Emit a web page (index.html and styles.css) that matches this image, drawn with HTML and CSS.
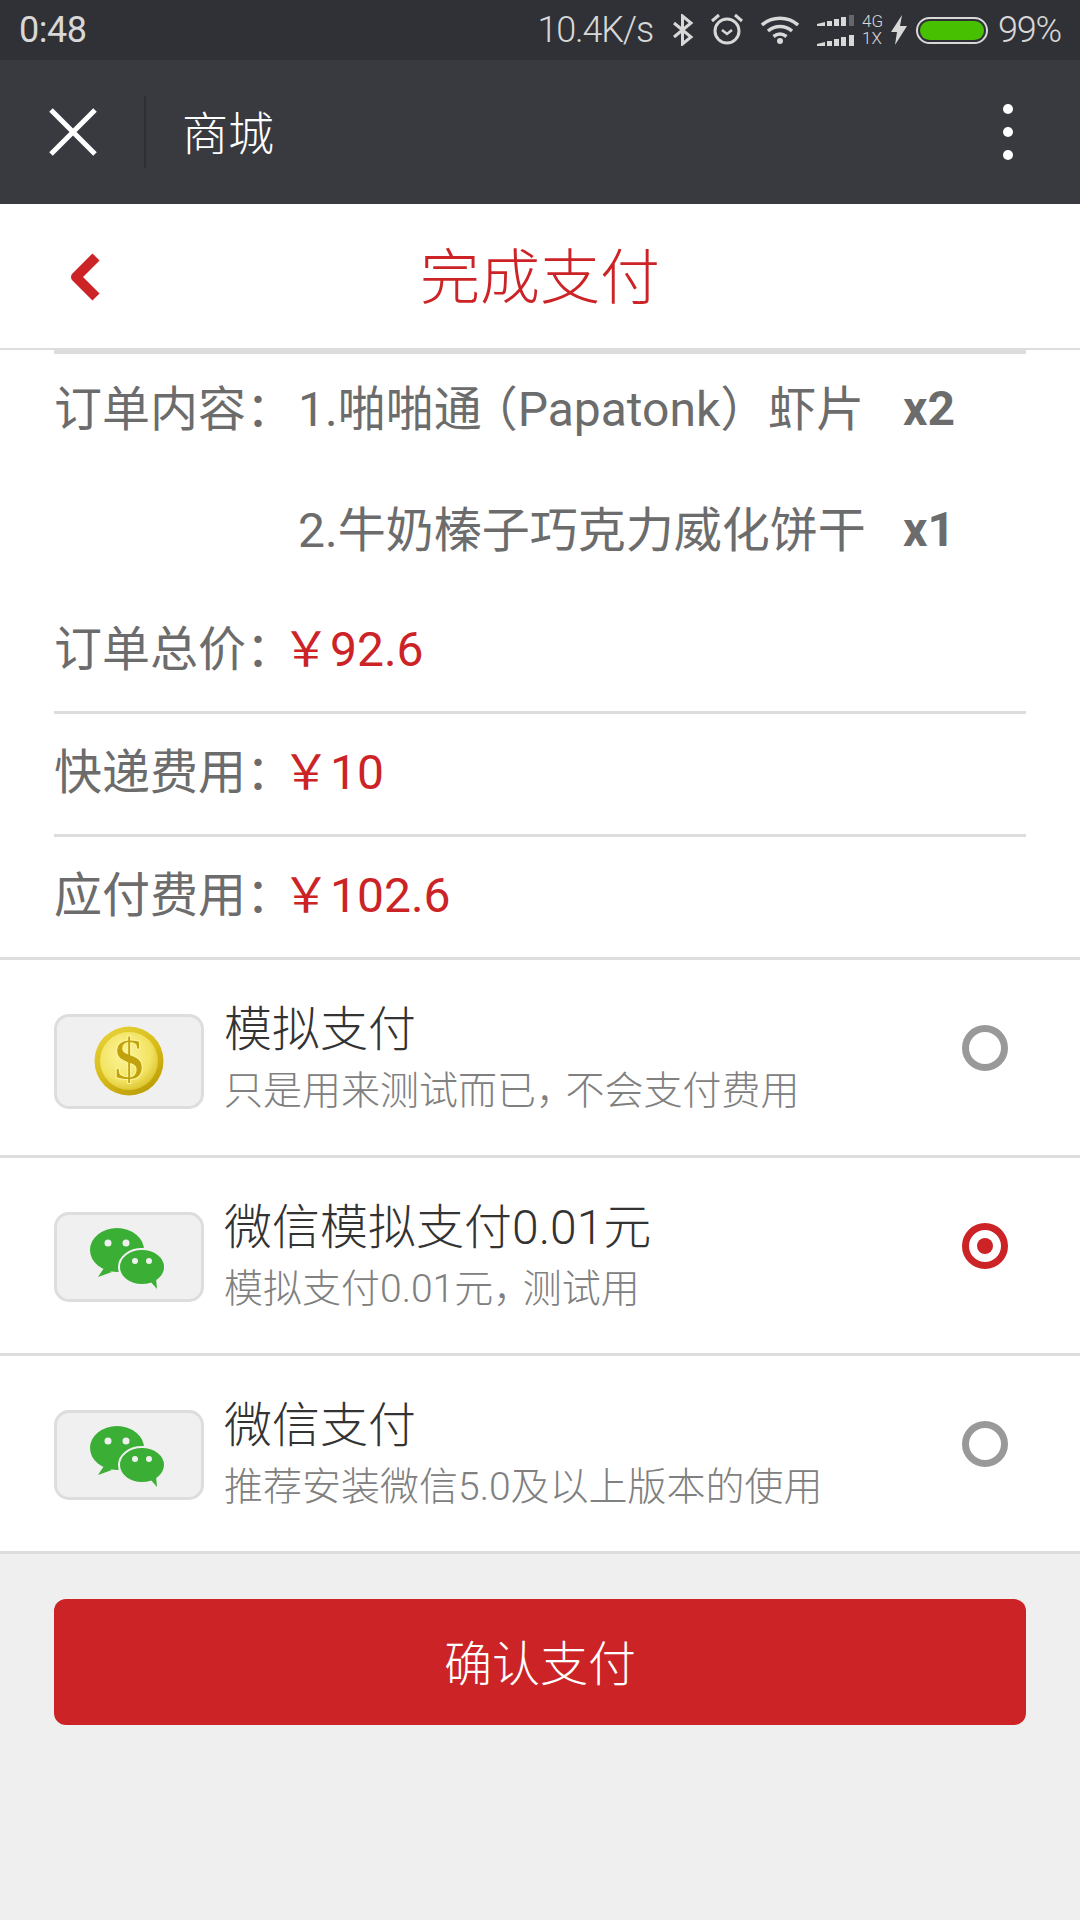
FILE: index.html
```html
<!DOCTYPE html>
<html lang="zh-CN">
<head>
  <meta charset="UTF-8">
  <title>完成支付</title>
  <link rel="stylesheet" href="styles.css">
</head>
<body>

  <!-- status bar -->
  <div class="status-bar">
    <span class="status-time">0:48</span>
    <div class="status-icons">
      <span class="net-speed">10.4K/s</span>
      <svg class="ic-bt" width="22" height="32" viewBox="0 0 22 32"><path d="M2 9l17 14-8.500 7V2L19 9 2 23" fill="none" stroke="#d8d8d8" stroke-width="3"/></svg>
      <svg class="ic-alarm" width="32" height="32" viewBox="0 0 32 32"><circle cx="16" cy="18" r="12" fill="none" stroke="#d8d8d8" stroke-width="3"/><path d="M11 17l5 4 5-4" fill="none" stroke="#d8d8d8" stroke-width="2.500"/><path d="M1 8l7-6M31 8l-7-6" stroke="#d8d8d8" stroke-width="3"/></svg>
      <svg class="ic-wifi" width="38" height="28" viewBox="0 0 38 28"><path d="M1 9c10-9 26-9 36 0M7 15c7-6 17-6 24 0M12.500 20.500c4-3 9-3 13 0" fill="none" stroke="#d8d8d8" stroke-width="3.500"/><circle cx="19" cy="25" r="3" fill="#d8d8d8"/></svg>
      <svg class="ic-signal" width="37" height="31" viewBox="0 0 37 31"><path d="M0 9l8-2v4H0zM10 6h5v5h-5zM17 4h5v7h-5zM24 2h5v9h-5z" fill="#d8d8d8"/><path d="M32 0h5v11h-5z" fill="#66676a"/><path d="M0 29l8-2v4H0zM10 26h5v5h-5zM17 24h5v7h-5zM24 22h5v9h-5zM32 20h5v11h-5z" fill="#d8d8d8"/></svg>
      <div class="net-type"><span>4G</span><span>1X</span></div>
      <svg class="ic-bolt" width="16" height="30" viewBox="0 0 16 30"><path d="M11 0L0 17h6L4 30 16 11h-7z" fill="#d8d8d8"/></svg>
      <div class="battery"><div class="battery-fill"></div></div>
      <span class="battery-pct">99%</span>
    </div>
  </div>

  <!-- webview nav -->
  <div class="nav-bar">
    <svg class="nav-close" width="48" height="48" viewBox="0 0 48 48"><path d="M2 2l44 44M46 2L2 46" stroke="#fff" stroke-width="5"/></svg>
    <div class="nav-line"></div>
    <span class="nav-title">商城</span>
    <div class="nav-more"><i></i><i></i><i></i></div>
  </div>

  <!-- page header -->
  <div class="header">
    <svg class="back" width="32" height="48" viewBox="0 0 32 48"><path d="M27 4L7 24l20 20" fill="none" stroke="#cc2326" stroke-width="10" stroke-linejoin="round"/></svg>
    <h1 class="header-title">完成支付</h1>
  </div>

  <div class="order">
    <div class="order-row first">
      <span class="label">订单内容<span class="half">：</span></span>
      <span class="item-name">1.啪啪通<span class="half paren">（</span>Papatonk）虾片</span>
      <b class="item-count">x2</b>
    </div>
    <div class="order-row">
      <span class="label"></span>
      <span class="item-name">2.牛奶榛子巧克力威化饼干</span>
      <b class="item-count">x1</b>
    </div>
    <div class="order-row line">
      <span class="label">订单总价<span class="half">：</span></span>
      <span class="price">￥92.6</span>
    </div>
    <div class="order-row line">
      <span class="label">快递费用<span class="half">：</span></span>
      <span class="price">￥10</span>
    </div>
    <div class="order-row">
      <span class="label">应付费用<span class="half">：</span></span>
      <span class="price">￥102.6</span>
    </div>
  </div>

  <div class="pay-list">
    <div class="pay-item">
      <div class="pay-icon tall">
        <svg width="72" height="72" viewBox="0 0 72 72">
          <defs>
            <radialGradient id="coin" cx="42%" cy="38%" r="65%">
              <stop offset="0" stop-color="#fdf59a"/>
              <stop offset="0.7" stop-color="#f2e362"/>
              <stop offset="1" stop-color="#dcc42e"/>
            </radialGradient>
            <linearGradient id="rim" x1="0.2" y1="0" x2="0.8" y2="1">
              <stop offset="0" stop-color="#e6d23a"/>
              <stop offset="0.5" stop-color="#d8bc18"/>
              <stop offset="1" stop-color="#b99a06"/>
            </linearGradient>
          </defs>
          <circle cx="36" cy="36" r="34.500" fill="url(#rim)"/>
          <circle cx="36" cy="36" r="29" fill="url(#coin)"/>
          <text class="coin-mark" x="36" y="54" text-anchor="middle">$</text>
        </svg>
      </div>
      <div class="pay-text">
        <div class="pay-name">模拟支付</div>
        <div class="pay-desc">只是用来测试而已<span class="half comma">，</span>不会支付费用</div>
      </div>
      <div class="radio"></div>
    </div>
    <div class="pay-item">
      <div class="pay-icon">
        <svg width="90" height="85" viewBox="-1 -2 90 85"><use href="#wx"/></svg>
      </div>
      <div class="pay-text">
        <div class="pay-name">微信模拟支付0.01元</div>
        <div class="pay-desc">模拟支付0.01元<span class="half comma">，</span>测试用</div>
      </div>
      <div class="radio on"></div>
    </div>
    <div class="pay-item">
      <div class="pay-icon">
        <svg width="90" height="85" viewBox="-1 -2 90 85"><use href="#wx"/></svg>
      </div>
      <div class="pay-text">
        <div class="pay-name">微信支付</div>
        <div class="pay-desc">推荐安装微信5.0及以上版本的使用</div>
      </div>
      <div class="radio"></div>
    </div>
  </div>

  <button class="pay-btn">确认支付</button>

  <!-- wechat logo, used twice -->
  <svg class="defs" width="0" height="0">
    <symbol id="wx" viewBox="0 0 90 85">
      <ellipse cx="32" cy="34" rx="27" ry="22" fill="#3bae36"/>
      <path d="M19 52l-6 9 14-5z" fill="#3bae36"/>
      <ellipse cx="57" cy="51" rx="23" ry="18" fill="#3bae36" stroke="#f0f0f0" stroke-width="2"/>
      <path d="M65 65l7 8-1-11z" fill="#3bae36"/>
      <circle cx="23" cy="27" r="3.500" fill="#f0f0f0"/>
      <circle cx="41" cy="27" r="3.500" fill="#f0f0f0"/>
      <circle cx="50" cy="45" r="3" fill="#f0f0f0"/>
      <circle cx="64" cy="45" r="3" fill="#f0f0f0"/>
    </symbol>
  </svg>

</body>
</html>
```

FILE: styles.css
```css
* {
  box-sizing: border-box;
}
html, body {
  height: 100%;
}
body {
  margin: 0;
  background: #efefef;
  color: #6c6c6c;
  font-family: Roboto, "Noto Sans CJK SC", sans-serif;
}

/* status bar */
.status-bar {
  height: 60px;
  background: #303136;
  color: #d8d8d8;
  display: flex;
  align-items: center;
  justify-content: space-between;
  padding: 0 19px;
  font-size: 36px;
}
.status-time {
  letter-spacing: -0.5px;
}
.status-icons {
  display: flex;
  align-items: center;
}
.net-speed,
.battery-pct {
  font-weight: 300;
  letter-spacing: -1.2px;
}
.ic-bt { margin-left: 19px; }
.ic-alarm { margin-left: 17px; margin-top: -2px; }
.ic-wifi { margin-left: 18px; margin-top: -1px; }
.ic-signal { margin-left: 18px; }
.net-type {
  display: flex;
  flex-direction: column;
  margin-left: 8px;
  font-size: 17px;
  font-weight: 300;
  line-height: 17px;
}
.ic-bolt { margin-left: 8px; }
.battery {
  width: 72px;
  height: 27px;
  margin-left: 9px;
  padding: 2px;
  border: 2px solid #d8d8d8;
  border-radius: 14px;
}
.battery-fill {
  height: 100%;
  background: #46c000;
  border-radius: 10px;
}
.battery-pct {
  margin-left: 10px;
}

/* nav */
.nav-bar {
  height: 144px;
  background: #393a40;
  display: flex;
  align-items: center;
  padding: 0 67px 0 49px;
}
.nav-line {
  width: 2px;
  height: 72px;
  margin-left: 47px;
  background: #2e2f33;
}
.nav-title {
  margin-left: 36px;
  margin-bottom: 4px;
  color: #fff;
  font-size: 46px;
  font-weight: 300;
}
.nav-more {
  margin-left: auto;
  display: flex;
  flex-direction: column;
  gap: 13px;
}
.nav-more i {
  display: block;
  width: 10px;
  height: 10px;
  border-radius: 50%;
  background: #fff;
}

/* header */
.header {
  position: relative;
  height: 146px;
  padding-bottom: 8px;
  background: #fff;
  border-bottom: 2px solid #ddd;
  display: flex;
  align-items: center;
  justify-content: center;
}
.back {
  position: absolute;
  left: 69px;
  top: 49px;
}
.header-title {
  margin: 0;
  color: #cc2326;
  font-size: 60px;
  font-weight: 300;
}

/* order */
.order {
  background: #fff;
  padding: 0 54px;
  border-bottom: 3px solid #ddd;
}
.order::before {
  content: "";
  display: block;
  height: 4px;
  background: #ddd;
}
.order-row {
  display: flex;
  align-items: center;
  height: 119px;
  padding-bottom: 13px;
  font-size: 48px;
}
.order-row.first {
  padding-bottom: 17px;
}
.order-row.line {
  height: 123px;
  border-bottom: 3px solid #ddd;
}
.order-row.line:nth-child(3) {
  height: 122px;
}
.order-row:last-child {
  height: 120px;
}
.label {
  width: 228px;
  flex: none;
}
.half {
  font-feature-settings: "halt";
}
.item-name {
  width: 605px;
  flex: none;
  margin-left: 16px;
}
.paren {
  margin-left: 12px;
}
.item-count {
  margin-top: 6px;
  font-weight: 700;
}
.price {
  color: #cc2326;
}

/* pay options */
.pay-list {
  background: #fff;
}
.pay-item {
  height: 198px;
  display: flex;
  align-items: center;
  padding: 0 72px 0 54px;
  border-bottom: 3px solid #ddd;
}
.pay-icon {
  width: 150px;
  height: 90px;
  flex: none;
  margin-top: 2px;
  background: #f0f0f0;
  border: 3px solid #ddd;
  border-radius: 15px;
  display: flex;
  align-items: center;
  justify-content: center;
}
.pay-icon.tall {
  height: 95px;
  margin-top: 7px;
}
.coin-mark {
  fill: #c2a20c;
  stroke: #fff6a0;
  stroke-width: 1px;
  font-family: "Liberation Serif", serif;
  font-size: 60px;
  font-weight: 700;
}
.pay-text {
  flex: 1;
  margin-top: 4px;
  margin-left: 20px;
}
.pay-name {
  color: #333;
  font-size: 48px;
  font-weight: 300;
  line-height: 62px;
}
.pay-desc {
  color: #808080;
  font-size: 39px;
  font-weight: 300;
  line-height: 60px;
}
.comma {
  margin-right: 10px;
}
.radio {
  width: 46px;
  height: 46px;
  flex: none;
  margin-bottom: 20px;
  border: 7px solid #999;
  border-radius: 50%;
}
.radio.on {
  border-color: #cc2326;
  display: flex;
  align-items: center;
  justify-content: center;
}
.radio.on::after {
  content: "";
  width: 16px;
  height: 16px;
  border-radius: 50%;
  background: #cc2326;
}

.pay-btn {
  display: block;
  width: 972px;
  height: 126px;
  margin: 45px 54px 0;
  padding: 0 0 4px;
  border: none;
  border-radius: 12px;
  background: #cc2326;
  color: #fff;
  font-family: inherit;
  font-size: 48px;
  font-weight: 300;
}
.defs {
  position: absolute;
}
```
